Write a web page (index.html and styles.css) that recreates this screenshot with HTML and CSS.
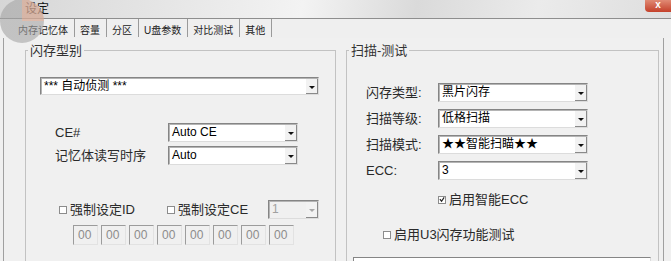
FILE: index.html
```html
<!DOCTYPE html>
<html lang="zh-CN">

<head>
    <meta charset="UTF-8">
    <meta name="viewport" content="width=device-width, initial-scale=1.0">
    <title>设定</title>
    <link rel="stylesheet" href="styles.css">
</head>

<body>
    <div class="window">
        <div class="titlebar">
            <span class="title">设定</span>
            <span class="close">x</span>
        </div>
        <div class="tabs">
            <span class="tab tab-active">内存记忆体</span>
            <span class="tab">容量</span>
            <span class="tab">分区</span>
            <span class="tab">U盘参数</span>
            <span class="tab">对比测试</span>
            <span class="tab">其他</span>
        </div>
        <div class="panel">
            <fieldset class="group group-left">
                <legend>闪存型别</legend>
                <div class="combo combo-wide"><span class="value">*** 自动侦测 ***</span><span class="arrow"></span></div>
                <div class="row row-first">
                    <span class="label">CE#</span>
                    <div class="combo"><span class="value">Auto CE</span><span class="arrow"></span></div>
                </div>
                <div class="row row-next">
                    <span class="label">记忆体读写时序</span>
                    <div class="combo"><span class="value">Auto</span><span class="arrow"></span></div>
                </div>
                <div class="force-row">
                    <span class="check check-id"><span class="box"></span>强制设定ID</span>
                    <span class="check check-ce"><span class="box"></span>强制设定CE</span>
                    <div class="combo combo-small disabled"><span class="value">1</span><span class="arrow"></span></div>
                </div>
                <div class="hex-row">
                    <span class="hex">00</span>
                    <span class="hex">00</span>
                    <span class="hex">00</span>
                    <span class="hex">00</span>
                    <span class="hex">00</span>
                    <span class="hex">00</span>
                    <span class="hex">00</span>
                    <span class="hex">00</span>
                </div>
            </fieldset>
            <fieldset class="group group-right">
                <legend>扫描-测试</legend>
                <div class="row scan-first">
                    <span class="label">闪存类型:</span>
                    <div class="combo"><span class="value">黑片闪存</span><span class="arrow"></span></div>
                </div>
                <div class="row scan-next">
                    <span class="label">扫描等级:</span>
                    <div class="combo"><span class="value">低格扫描</span><span class="arrow"></span></div>
                </div>
                <div class="row scan-next">
                    <span class="label">扫描模式:</span>
                    <div class="combo"><span class="value">★★智能扫瞄★★</span><span class="arrow"></span></div>
                </div>
                <div class="row scan-next">
                    <span class="label">ECC:</span>
                    <div class="combo"><span class="value">3</span><span class="arrow"></span></div>
                </div>
                <span class="check check-ecc">
                    <span class="box checked">
                        <svg width="7" height="7" viewBox="0 0 7 7"><polyline points="1,3 3,5.5 6,1" fill="none" stroke="#222" stroke-width="1.4"/></svg>
                    </span>启用智能ECC
                </span>
                <span class="check check-u3"><span class="box"></span>启用U3闪存功能测试</span>
                <div class="log">f ... Creating new block table for format testing ...</div>
            </fieldset>
        </div>
        <div class="pointer"></div>
    </div>
</body>

</html>
```

FILE: styles.css
```css
body {
    margin: 0;
    width: 671px;
    height: 261px;
    overflow: hidden;
    background: #f0f0f0;
    font-family: "Liberation Sans", "Noto Sans CJK SC", sans-serif;
    color: #222;
}

.window {
    position: relative;
    display: flex;
    flex-direction: column;
    height: 261px;
}

.titlebar {
    display: flex;
    align-items: flex-start;
    height: 18px;
    border-bottom: 1px solid #8e8e8e;
    background: linear-gradient(100deg, #d6d6d6 0%, #e6e6e6 25%, #f3f3f3 45%, #dadada 62%, #ebebeb 80%, #dedede 100%);
}

.title {
    padding-left: 25px;
    font-size: 12px;
    line-height: 18px;
    color: #111;
}

.close {
    margin-left: auto;
    width: 26px;
    height: 12px;
    border-radius: 0 0 0 4px;
    background: linear-gradient(#e08a74, #c4402a);
    color: #fff;
    font-size: 10px;
    font-weight: bold;
    line-height: 10px;
    text-align: center;
}

.tabs {
    display: flex;
    height: 19px;
    padding-left: 14px;
    background: #efefef;
}

.tab {
    padding: 0 6px 0 5px;
    font-size: 10px;
    line-height: 24px;
    color: #222;
    border-right: 1px solid #9a9a9a;
    margin-bottom: 1px;
}

.tab-active {
    padding-left: 4px;
}

.panel {
    flex: 1;
    display: flex;
    align-items: flex-start;
    gap: 10px;
    width: 661px;
    margin-left: 3px;
    padding-left: 21px;
    box-sizing: border-box;
    border-left: 1px solid #a0a0a0;
    border-right: 1px solid #a0a0a0;
    background: #f0f0f0;
}

.group {
    margin: 5px 0 0;
    padding: 0;
    min-width: 0;
    height: 240px;
    box-sizing: border-box;
    border: 1px solid #c2c2c2;
    display: flex;
    flex-direction: column;
    align-items: flex-start;
}

.group-left {
    width: 311px;
}

.group-right {
    width: 313px;
}

legend {
    margin-left: 2px;
    padding: 0 2px;
    font-size: 13px;
    line-height: 15px;
    color: #333;
}

.combo {
    display: flex;
    width: 130px;
    height: 19px;
    box-sizing: border-box;
    background: #fff;
    border: 1px solid;
    border-color: #858585 #dcdcdc #dcdcdc #858585;
    box-shadow: inset 1px 1px 0 #b4b4b4;
}

.combo .value {
    flex: 1;
    padding-left: 3px;
    font-size: 12px;
    line-height: 17px;
    color: #000;
    white-space: nowrap;
    overflow: hidden;
}

.arrow {
    position: relative;
    width: 11px;
    margin: 1px 0 0 0;
    background: #f2f2f2;
    border-right: 1px solid #8a8a8a;
    border-bottom: 1px solid #8a8a8a;
}

.arrow::after {
    content: "";
    position: absolute;
    left: 3px;
    top: 7px;
    border-left: 3px solid transparent;
    border-right: 3px solid transparent;
    border-top: 3px solid #111;
}

.combo-wide {
    width: 279px;
    height: 18px;
    margin: 19px 0 0 14px;
}

.combo-small {
    width: 51px;
}

.disabled {
    background: #f0f0f0;
}

.disabled .value {
    color: #a0a0a0;
}

.disabled .arrow::after {
    border-top-color: #a8a8a8;
}

.row {
    display: flex;
    align-items: center;
    line-height: 19px;
}

.label {
    font-size: 13px;
    color: #2a2a2a;
}

.group-left .row {
    margin-left: 29px;
}

.group-left .label {
    width: 113px;
}

.row-first {
    margin-top: 28px;
}

.row-next {
    margin-top: 4px;
}

.check {
    display: flex;
    align-items: center;
    gap: 3px;
    font-size: 13px;
    line-height: 15px;
    color: #2a2a2a;
}

.box {
    display: flex;
    align-items: center;
    justify-content: center;
    width: 8px;
    height: 8px;
    box-sizing: border-box;
    border: 1px solid #8c8c8c;
    background: #fff;
}

.force-row {
    display: flex;
    align-items: center;
    margin: 35px 0 0 33px;
}

.check-id {
    width: 108px;
}

.check-ce {
    width: 101px;
}

.hex-row {
    display: flex;
    gap: 3px;
    margin: 6px 0 0 47px;
}

.hex {
    width: 25px;
    height: 20px;
    box-sizing: border-box;
    padding-left: 4px;
    border: 1px solid;
    border-color: #9c9c9c #e2e2e2 #e2e2e2 #9c9c9c;
    font-size: 12px;
    line-height: 18px;
    color: #8c8c8c;
}

.group-right .row {
    margin-left: 19px;
}

.group-right .label {
    width: 72px;
}

.group-right .combo {
    width: 150px;
}

.scan-first {
    margin-top: 25px;
}

.scan-next {
    margin-top: 7px;
}

.check-ecc {
    margin: 12px 0 0 91px;
}

.check-u3 {
    margin: 20px 0 0 36px;
}

.log {
    width: 298px;
    height: 30px;
    margin: 15px 0 0 6px;
    box-sizing: border-box;
    padding: 1px 4px;
    background: #fff;
    border: 1px solid;
    border-color: #858585 #dcdcdc #dcdcdc #858585;
    font-size: 12px;
    line-height: 14px;
    white-space: nowrap;
    overflow: hidden;
}

.pointer {
    position: absolute;
    left: 0;
    top: -1px;
    width: 44px;
    height: 44px;
    border-radius: 50%;
    background: conic-gradient(rgba(214, 170, 150, 0.75) 0 25%, rgba(165, 165, 165, 0.6) 25% 100%);
}
```
